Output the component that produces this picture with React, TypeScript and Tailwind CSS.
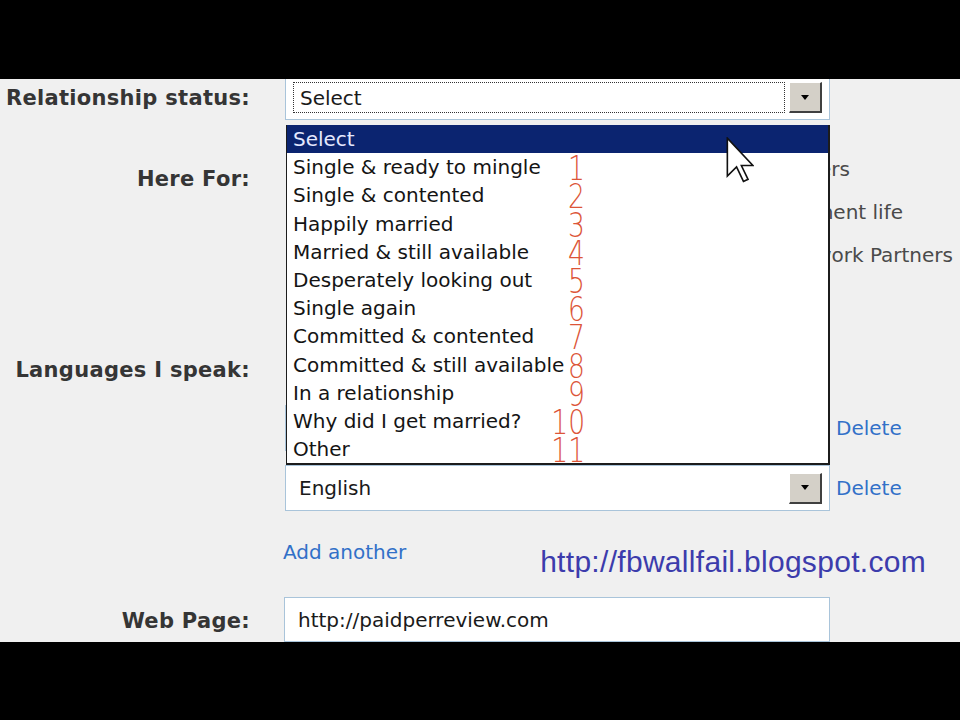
import React from "react";

const options = [
  "Single & ready to mingle",
  "Single & contented",
  "Happily married",
  "Married & still available",
  "Desperately looking out",
  "Single again",
  "Committed & contented",
  "Committed & still available",
  "In a relationship",
  "Why did I get married?",
  "Other",
];

function DropButton() {
  return (
    <div className="w-[33px] h-[31px] shrink-0 bg-[#d4d0c8] border-t border-l border-t-white border-l-white border-r-2 border-b-2 border-r-[#404040] border-b-[#404040] flex items-center justify-center">
      <div className="w-0 h-0 border-l-[4px] border-r-[4px] border-t-[5px] border-l-transparent border-r-transparent border-t-black" />
    </div>
  );
}

function Cursor() {
  return (
    <svg width="28" height="46" viewBox="0 0 12 20" className="absolute left-[726px] top-[58px] z-20">
      <polygon
        points="0.5,0.5 0.5,17 4.5,13 7.5,19.3 9.5,18.4 6.6,12.4 11.6,12.4"
        fill="white"
        stroke="#111"
        strokeWidth="0.7"
        strokeLinejoin="miter"
      />
    </svg>
  );
}

function LangRow({ text }: { text: string }) {
  return (
    <div className="flex items-center">
      <div className="w-[545px] h-[46px] border border-[#a9c4da] bg-white flex items-center justify-between pl-[13px] pr-[7px]">
        <span className="text-[#1a1a1a]">{text}</span>
        <DropButton />
      </div>
      <span className="ml-[6px] text-[#3270c8]">Delete</span>
    </div>
  );
}

export default function App() {
  const sans = "font-['DejaVu_Sans',sans-serif] text-[20px]";
  const label = "w-[250px] text-right font-bold text-[21px] tracking-[0.3px] text-[#353535]";
  return (
    <div className={`w-[960px] h-[720px] bg-black flex flex-col ${sans}`}>
      <div className="h-[79px] shrink-0 bg-black" />
      <div className="h-[563px] shrink-0 bg-[#f0f0f0] overflow-hidden relative flex flex-col">
        <Cursor />
        {/* Relationship status */}
        <div className="flex items-center mt-[-4px] h-[45px] shrink-0">
          <div className={`${label} pt-[3px]`}>Relationship status:</div>
          <div className="ml-[35px] relative w-[545px] h-[45px] border border-[#a9c4da] bg-white flex items-center px-[7px] z-10">
            <div className="flex-1 h-[31px] border border-dotted border-[#333] flex items-center pl-[6px] mr-[4px] text-[#1a1a1a]">
              Select
            </div>
            <DropButton />
            <div className="absolute left-0 top-[49px] w-[544px] bg-white border-l border-r-2 border-b-2 border-[#1c1c1c]">
              <div className="h-[28.2px] leading-[28px] pl-[6px] bg-[#0b2470] text-[#e4e8ff]">Select</div>
              {options.map((o, i) => (
                <div key={o} className="relative h-[28.2px] leading-[28px] pl-[6px] text-[#141414] whitespace-nowrap">
                  {o}
                  <span className="absolute top-[1px] left-[238px] w-[60px] text-right font-['DejaVu_Sans',sans-serif] font-extralight text-[34px] leading-[28px] text-[#dc5538] scale-x-[0.78] origin-right">
                    {i + 1}
                  </span>
                </div>
              ))}
            </div>
          </div>
        </div>

        {/* Here For */}
        <div className="flex shrink-0">
          <div className={`${label} mt-[38px] h-[43px] leading-[43px]`}>Here For:</div>
          <div className="ml-[35px] mt-[27px] flex flex-col text-[#4a4a4a]">
            <div className="h-[43px] w-[565px] flex items-center justify-end whitespace-nowrap">Friendship &amp; Chatters</div>
            <div className="h-[43px] w-[618px] flex items-center justify-end whitespace-nowrap">Spiritual &amp; Contentment life</div>
            <div className="h-[43px] w-[668px] flex items-center justify-end whitespace-nowrap">Business &amp; Network Partners</div>
          </div>
        </div>

        {/* Languages */}
        <div className="flex shrink-0">
          <div className={`${label} mt-[82px] h-[24px] leading-[24px]`}>Languages I speak:</div>
          <div className="ml-[35px] mt-[129px] flex flex-col gap-[14px]">
            <LangRow text="Hindi" />
            <LangRow text="English" />
          </div>
        </div>

        {/* Add another + watermark */}
        <div className="flex shrink-0 mt-[26px] ml-[283px] w-[643px] justify-between items-start">
          <span className="h-[30px] leading-[30px] text-[#3270c8]">Add another</span>
          <span className="mt-[10px] h-[30px] leading-[30px] font-['Liberation_Sans',sans-serif] text-[30px] tracking-[0.3px] text-[#3c3cac]">
            http://fbwallfail.blogspot.com
          </span>
        </div>

        {/* Web page */}
        <div className="flex items-center shrink-0 mt-[20px]">
          <div className={`${label} pt-[5px]`}>Web Page:</div>
          <div className="ml-[34px] w-[546px] h-[45px] border border-[#a9c4da] bg-white flex items-center pl-[13px] text-[#1a1a1a]">
            http://paidperreview.com
          </div>
        </div>
      </div>
      <div className="h-[78px] shrink-0 bg-black" />
    </div>
  );
}
